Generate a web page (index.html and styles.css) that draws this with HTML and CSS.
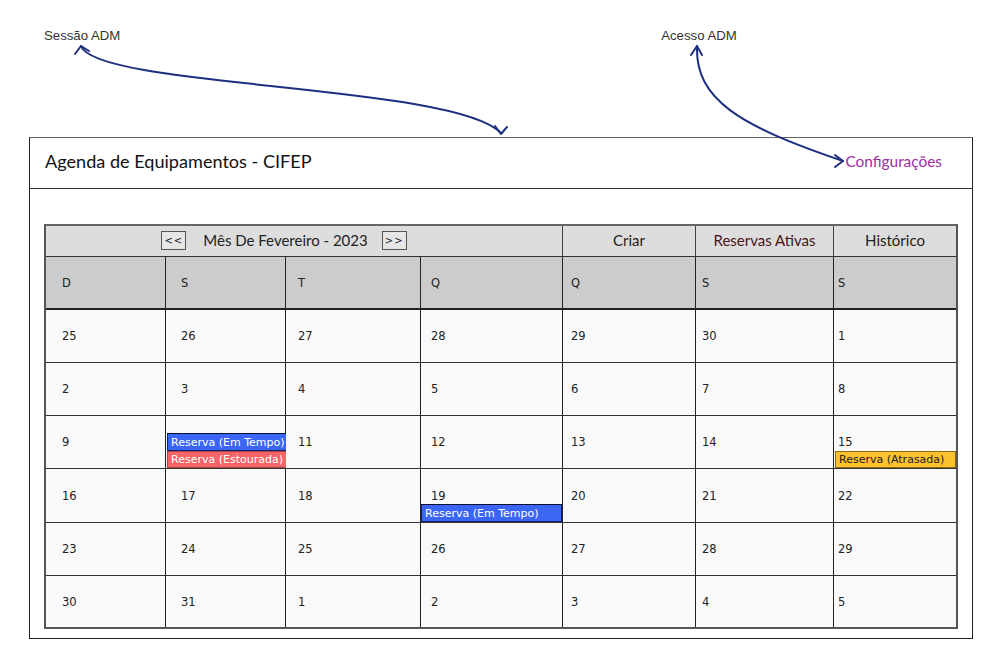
FILE: index.html
```html
<!DOCTYPE html>
<html lang="pt-BR">
<head>
<meta charset="utf-8">
<title>Agenda de Equipamentos - CIFEP</title>
<link rel="stylesheet" href="styles.css">
</head>
<body>
<div class="page">
  <div class="notes">
    <span class="note note-sessao">Sessão ADM</span>
    <span class="note note-acesso">Acesso ADM</span>
  </div>

  <div class="frame">
    <header class="frame-head">
      <h1 class="title">Agenda de Equipamentos - CIFEP</h1>
      <a class="config" href="#">Configurações</a>
    </header>

    <div class="frame-body">
      <div class="cal">
        <div class="cal-top month">
          <span class="navbtn">&lt;&lt;</span>
          <span class="month-label">Mês De Fevereiro - 2023</span>
          <span class="navbtn">&gt;&gt;</span>
        </div>
        <div class="cal-top">Criar</div>
        <div class="cal-top active">Reservas Ativas</div>
        <div class="cal-top last">Histórico</div>

        <div class="wd c0">D</div>
        <div class="wd c1">S</div>
        <div class="wd c2">T</div>
        <div class="wd c3">Q</div>
        <div class="wd c4">Q</div>
        <div class="wd c5">S</div>
        <div class="wd c6 last">S</div>

        <div class="day c0">25</div>
        <div class="day c1">26</div>
        <div class="day c2">27</div>
        <div class="day c3">28</div>
        <div class="day c4">29</div>
        <div class="day c5">30</div>
        <div class="day c6 last">1</div>

        <div class="day c0">2</div>
        <div class="day c1">3</div>
        <div class="day c2">4</div>
        <div class="day c3">5</div>
        <div class="day c4">6</div>
        <div class="day c5">7</div>
        <div class="day c6 last">8</div>

        <div class="day c0">9</div>
        <div class="day c1">
          <div class="events events-full">
            <div class="ev ev-blue">Reserva (Em Tempo)</div>
            <div class="ev ev-red">Reserva (Estourada)</div>
          </div>
        </div>
        <div class="day c2">11</div>
        <div class="day c3">12</div>
        <div class="day c4">13</div>
        <div class="day c5">14</div>
        <div class="day c6 last">15
          <div class="events">
            <div class="ev ev-yellow">Reserva (Atrasada)</div>
          </div>
        </div>

        <div class="day c0">16</div>
        <div class="day c1">17</div>
        <div class="day c2">18</div>
        <div class="day c3">19
          <div class="events events-wide">
            <div class="ev ev-blue">Reserva (Em Tempo)</div>
          </div>
        </div>
        <div class="day c4">20</div>
        <div class="day c5">21</div>
        <div class="day c6 last">22</div>

        <div class="day c0">23</div>
        <div class="day c1">24</div>
        <div class="day c2">25</div>
        <div class="day c3">26</div>
        <div class="day c4">27</div>
        <div class="day c5">28</div>
        <div class="day c6 last">29</div>

        <div class="day c0 bottom">30</div>
        <div class="day c1 bottom">31</div>
        <div class="day c2 bottom">1</div>
        <div class="day c3 bottom">2</div>
        <div class="day c4 bottom">3</div>
        <div class="day c5 bottom">4</div>
        <div class="day c6 last bottom">5</div>
      </div>
    </div>
  </div>

  <svg class="arrows" width="1000" height="657" viewBox="0 0 1000 657" aria-hidden="true">
    <g fill="none" stroke="#1f2f7f" stroke-width="2" stroke-linecap="round" stroke-linejoin="round">
      <path d="M81 46 C 96 88, 455 84, 501 133"/>
      <path d="M75 54 L81 46 L89 51"/>
      <path d="M495 126 L501 134 L507 127"/>
      <path d="M697 46 C 695 100, 740 126, 843 161"/>
      <path d="M691 55 L697 46 L702 55"/>
      <path d="M835 155 L843 161 L835 167"/>
    </g>
  </svg>
</div>
</body>
</html>
```

FILE: styles.css
```css
* { box-sizing: border-box; }

html, body {
  margin: 0;
  padding: 0;
  background: #ffffff;
}

.page {
  position: relative;
  width: 1000px;
  height: 657px;
  font-family: "Lato", "Liberation Sans", sans-serif;
  color: #222;
}

/* annotation labels */
.notes {
  display: flex;
  height: 137px;
  padding-top: 27px;
  font-family: "Liberation Sans", Arial, sans-serif;
  font-size: 13.2px;
  color: #333;
}
.note { line-height: 17px; }
.note-sessao { margin-left: 44px; }
.note-acesso { margin-left: 541px; }

/* main frame */
.frame {
  margin-left: 29px;
  width: 944px;
  height: 502px;
  border: 1px solid #222;
  border-top-color: #666;
}

.frame-head {
  height: 51px;
  display: flex;
  align-items: center;
  justify-content: space-between;
  padding: 0 30px 5px 15px;
  border-bottom: 1px solid #333;
}

.title {
  margin: 0;
  font-size: 18.1px;
  font-weight: 400;
  color: #111;
}

.config {
  font-size: 15.4px;
  color: #9b2fa4;
  text-decoration: none;
  padding-top: 1px;
}

.frame-body {
  padding: 35px 13px 0 14px;
}

/* calendar grid */
.cal {
  display: grid;
  grid-template-columns: 120px 120px 135px 142px 133px 138px 122px;
  grid-template-rows: 31px 53px 53px 53px 53px 54px 53px 51px;
  width: 914px;
  border: 2px solid #555;
  border-top-color: #666;
}

.cal-top {
  background: #dddddd;
  display: flex;
  align-items: center;
  justify-content: center;
  padding-bottom: 2px;
  font-size: 15px;
  color: #222;
  border-right: 1px solid #444;
  border-bottom: 1px solid #333;
}
.cal-top.last { border-right: 0; }
.cal-top.active { color: #4a1515; }
.month {
  grid-column: 1 / span 4;
  padding-right: 40px;
}
.month-label { margin: 0 14px 0 17px; }

.navbtn {
  display: inline-flex;
  align-items: center;
  justify-content: center;
  width: 25px;
  height: 19px;
  border: 1.5px solid #555;
  background: #e6e6e6;
  font-family: "DejaVu Sans", sans-serif;
  font-size: 10px;
  letter-spacing: 1px;
  color: #222;
  margin-top: 1px;
}

.wd, .day {
  position: relative;
  display: flex;
  align-items: center;
  font-family: "DejaVu Sans", sans-serif;
  font-size: 11.5px;
  color: #222;
  border-right: 1px solid #222;
  border-bottom: 1px solid #333;
}
.wd {
  background: #cccccc;
  border-bottom: 2px solid #222;
}
.day { background: #f9f9f9; }
.last { border-right: 0; }
.bottom { border-bottom: 0; }

.c0 { padding-left: 16px; }
.c1 { padding-left: 15px; }
.c2 { padding-left: 12px; }
.c3 { padding-left: 10px; }
.c4 { padding-left: 8px; }
.c5 { padding-left: 6px; }
.c6 { padding-left: 4px; }

/* reservation badges lying over the cell's bottom edge */
.events {
  position: absolute;
  left: 1px;
  right: 0;
  bottom: 0;
  display: flex;
  flex-direction: column;
}
.events-full { right: -2px; }
.events-wide { left: 0; }

.ev {
  height: 18px;
  display: flex;
  align-items: center;
  padding-left: 3px;
  font-family: "DejaVu Sans", sans-serif;
  font-size: 11px;
  white-space: nowrap;
  overflow: hidden;
  border: 1px solid #1b2870;
}
.ev-blue {
  background: #3b66f5;
  color: #fff;
  border-color: #13206a;
  border-top-color: #0a0f33;
}
.ev-red {
  background: #f36566;
  color: #fff;
  border-color: #a44;
  height: 17px;
}
.ev-yellow {
  background: #fcc12f;
  color: #222;
  border-color: #8a6a10;
  height: 17px;
}

.arrows {
  position: absolute;
  left: 0;
  top: 0;
  pointer-events: none;
}
```
